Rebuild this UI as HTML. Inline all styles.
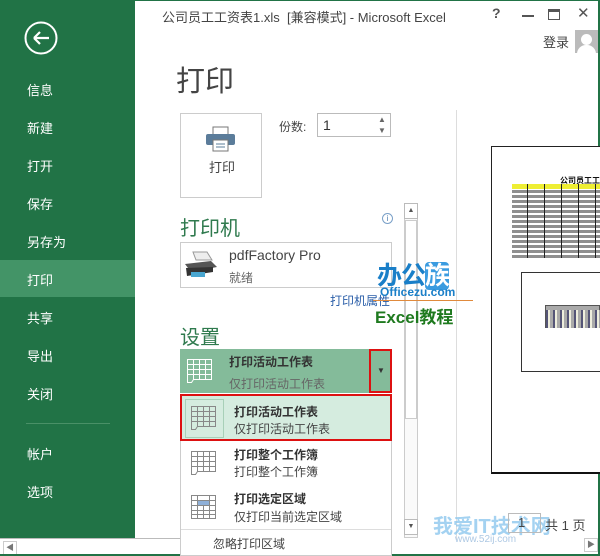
<!DOCTYPE html><html><head><meta charset="utf-8"><style>
*{margin:0;padding:0;box-sizing:border-box}
body{width:600px;height:556px;overflow:hidden;background:#fff;font-family:"Liberation Sans","Noto Sans CJK SC",sans-serif;position:relative;color:#444}
.a{position:absolute}
.side{left:0;top:0;width:135px;height:538px;background:#217346}
.si{position:absolute;left:27px;color:#fff;font-size:13px}
.t{font-size:12px;color:#444;white-space:nowrap}
</style></head><body>
<div class="a side">
<svg class="a" style="left:24px;top:21px" width="36" height="36"><circle cx="17" cy="17" r="15.5" fill="none" stroke="#fff" stroke-width="2"/><path d="M10 17H25M10 17L16 11M10 17L16 23" stroke="#fff" stroke-width="2.2" fill="none"/></svg>
<div class="si" style="top:80px">信息</div>
<div class="si" style="top:118px">新建</div>
<div class="si" style="top:156px">打开</div>
<div class="si" style="top:194px">保存</div>
<div class="si" style="top:232px">另存为</div>
<div class="a" style="left:0;top:260px;width:135px;height:37px;background:#439467"></div>
<div class="si" style="top:270px">打印</div>
<div class="si" style="top:308px">共享</div>
<div class="si" style="top:346px">导出</div>
<div class="si" style="top:384px">关闭</div>
<div class="a" style="left:26px;top:423px;width:84px;height:1px;background:#4a9067"></div>
<div class="si" style="top:444px">帐户</div>
<div class="si" style="top:482px">选项</div>
</div>
<div class="a" style="left:0;top:538px;width:180px;height:18px;border-top:1px solid #bbb;background:#fff"></div>
<div class="a" style="left:3px;top:541px;width:14px;height:14px;border:1px solid #ccc;font-size:8px;color:#777;text-align:center;line-height:12px">◀</div>
<div class="a" style="left:0;top:554px;width:600px;height:2px;background:#217346"></div>
<div class="a" style="left:598px;top:0;width:2px;height:556px;background:#217346"></div>
<div class="a" style="left:135px;top:0;width:465px;height:1px;background:#217346"></div>

<div class="a t" style="left:162px;top:7px;font-size:13px">公司员工工资表1.xls&nbsp; [兼容模式] - Microsoft Excel</div>
<div class="a" style="left:492px;top:5px;font-size:14px;font-weight:bold;color:#555">?</div>
<div class="a" style="left:522px;top:15px;width:12px;height:2px;background:#555"></div>
<div class="a" style="left:548px;top:9px;width:12px;height:11px;border:1px solid #555;border-top-width:3px"></div>
<div class="a" style="left:577px;top:4px;font-size:15px;color:#555">✕</div>
<div class="a t" style="left:543px;top:32px;font-size:13px">登录</div>
<div class="a" style="left:575px;top:30px;width:23px;height:23px;background:#bbb;overflow:hidden"><div class="a" style="left:6px;top:4px;width:11px;height:11px;border-radius:50%;background:#fff"></div><div class="a" style="left:2px;top:15px;width:19px;height:14px;border-radius:9px 9px 0 0;background:#fff"></div></div>

<div class="a" style="left:176px;top:58px;font-size:29px;color:#444">打印</div>
<div class="a" style="left:180px;top:113px;width:82px;height:85px;border:1px solid #ccc"></div>
<svg class="a" style="left:205px;top:126px" width="32" height="26"><rect x="8" y="1" width="15" height="8" fill="#fff" stroke="#777"/><rect x="1" y="8" width="29" height="11" rx="2" fill="#5b7c9a"/><rect x="8" y="14" width="15" height="11" fill="#fff" stroke="#777"/><path d="M11 18h9M11 21h9" stroke="#5b7c9a"/></svg>
<div class="a t" style="left:209px;top:157px;font-size:13px">打印</div>
<div class="a t" style="left:279px;top:118px">份数:</div>
<div class="a" style="left:317px;top:113px;width:74px;height:24px;border:1px solid #bbb"></div>
<div class="a" style="left:323px;top:117px;font-size:14px;color:#333">1</div>
<div class="a" style="left:378px;top:114px;font-size:8px;color:#666;line-height:11px">▲<br>▼</div>

<div class="a" style="left:180px;top:212px;font-size:20px;color:#2f7a4e">打印机</div>
<div class="a" style="left:382px;top:213px;width:11px;height:11px;border:1px solid #7aa0c8;border-radius:50%;font-size:8px;color:#5080b0;text-align:center;line-height:9px">i</div>
<div class="a" style="left:180px;top:242px;width:212px;height:46px;border:1px solid #ccc"></div>
<svg class="a" style="left:183px;top:250px" width="36" height="30"><path d="M10 2l14 0 5 8-16 0z" fill="#eee" stroke="#999"/><path d="M2 14l26-3 6 6-26 5z" fill="#555"/><path d="M3 18l27-1 0 5-26 4z" fill="#333"/><rect x="8" y="22" width="14" height="5" fill="#49a6d0"/></svg>
<div class="a t" style="left:229px;top:247px;font-size:14px">pdfFactory Pro</div>
<div class="a t" style="left:229px;top:269px;color:#666">就绪</div>
<div class="a t" style="left:330px;top:292px;color:#2a5ea8">打印机属性</div>

<div class="a" style="left:404px;top:203px;width:14px;height:335px;border:1px solid #ccc;background:#fafafa"></div>
<div class="a" style="left:404px;top:203px;width:14px;height:16px;border:1px solid #bbb;font-size:7px;text-align:center;line-height:14px;color:#555;background:#fff">▲</div>
<div class="a" style="left:405px;top:220px;width:12px;height:199px;border:1px solid #ccc;background:#fff"></div>
<div class="a" style="left:404px;top:519px;width:14px;height:16px;border:1px solid #bbb;font-size:7px;text-align:center;line-height:14px;color:#555;background:#fff">▼</div>
<div class="a" style="left:456px;top:110px;width:1px;height:430px;background:#ddd"></div>

<div class="a" style="left:180px;top:321px;font-size:20px;color:#2f7a4e">设置</div>
<div class="a" style="left:180px;top:349px;width:212px;height:44px;background:#84bb9a"></div>
<div class="a" style="left:369px;top:349px;width:23px;height:44px;border:2px solid #d11"></div>
<div class="a" style="left:377px;top:366px;font-size:8px;color:#333">▼</div>
<div class="a t" style="left:229px;top:353px;font-weight:bold;color:#333;font-size:12px">打印活动工作表</div>
<div class="a t" style="left:229px;top:375px;color:#666;font-size:12px">仅打印活动工作表</div>
<svg class="a" style="left:186px;top:358px" width="28" height="26"><g fill="none" stroke="#fff"><path d="M1.5 1.5h24v20h-18l-2 3h-4z"/><path d="M7.5 1.5v20M13.5 1.5v20M19.5 1.5v20M1.5 6.5h24M1.5 11.5h24M1.5 16.5h24"/></g></svg>

<div class="a" style="left:180px;top:394px;width:212px;height:162px;border:1px solid #ccc;border-top:none;background:#fff"></div>
<div class="a" style="left:180px;top:394px;width:212px;height:47px;background:#d5ecdf;border:2px solid #d11"></div>
<div class="a" style="left:185px;top:399px;width:39px;height:39px;border:1px solid #a8d0b8"></div>
<svg class="a" style="left:190px;top:405px" width="28" height="26"><g fill="none" stroke="#888"><path d="M1.5 1.5h24v20h-18l-2 3h-4z"/><path d="M7.5 1.5v20M13.5 1.5v20M19.5 1.5v20M1.5 6.5h24M1.5 11.5h24M1.5 16.5h24"/></g></svg>
<div class="a t" style="left:234px;top:403px;font-weight:bold;color:#333">打印活动工作表</div>
<div class="a t" style="left:234px;top:420px">仅打印活动工作表</div>
<svg class="a" style="left:190px;top:450px" width="28" height="26"><g fill="none" stroke="#888"><path d="M1.5 1.5h24v20h-18l-2 3h-4z"/><path d="M7.5 1.5v20M13.5 1.5v20M19.5 1.5v20M1.5 6.5h24M1.5 11.5h24M1.5 16.5h24"/></g></svg>
<div class="a t" style="left:234px;top:446px;font-weight:bold;color:#333">打印整个工作簿</div>
<div class="a t" style="left:234px;top:463px">打印整个工作簿</div>
<svg class="a" style="left:190px;top:494px" width="28" height="26"><rect x="7.5" y="6.5" width="12" height="5" fill="#8fb0d8"/><g fill="none" stroke="#888"><path d="M1.5 1.5h24v23h-24z"/><path d="M7.5 1.5v23M13.5 11.5v13M19.5 1.5v23M1.5 6.5h24M1.5 11.5h24M1.5 16.5h24M1.5 20.5h24"/></g></svg>
<div class="a t" style="left:234px;top:490px;font-weight:bold;color:#333">打印选定区域</div>
<div class="a t" style="left:234px;top:508px">仅打印当前选定区域</div>
<div class="a" style="left:181px;top:529px;width:210px;height:1px;background:#ddd"></div>
<div class="a t" style="left:213px;top:535px">忽略打印区域</div>

<div class="a" style="left:377px;top:256px;font-size:25px;font-weight:bold;color:#1a7fc8;letter-spacing:-1px">办公<span style="background:#3a9be0;color:#fff;border-radius:4px">族</span></div>
<div class="a" style="left:380px;top:285px;font-size:12px;font-weight:bold;color:#1a7fc8">Officezu.com</div>
<div class="a" style="left:373px;top:300px;width:100px;height:1px;background:#e08a3c"></div>
<div class="a" style="left:375px;top:303px;font-size:17px;font-weight:bold;color:#1f7a1f">Excel教程</div>

<div class="a" style="left:491px;top:146px;width:110px;height:328px;border:1px solid #222;border-bottom:2px solid #111;background:#fff"></div>
<div class="a" style="left:560px;top:175px;font-size:8px;font-weight:bold;color:#111">公司员工工</div>
<div class="a" style="left:512px;top:184px;width:88px;height:74px;background:repeating-linear-gradient(#fff 0 1px,#333 1px 4px,#fff 4px 5px);opacity:.55"></div>
<div class="a" style="left:512px;top:184px;width:88px;height:5px;background:#ee3"></div>
<div class="a" style="left:512px;top:184px;width:88px;height:74px;background:repeating-linear-gradient(90deg,transparent 0 15px,#222 15px 16px,transparent 16px 17px)"></div>
<div class="a" style="left:521px;top:272px;width:80px;height:100px;border:1px solid #333"></div>
<div class="a" style="left:545px;top:305px;width:55px;height:23px;background:#aaa;border:1px solid #555"></div>
<div class="a" style="left:546px;top:310px;width:54px;height:18px;background:repeating-linear-gradient(90deg,#557 0 2px,#eed 2px 4px,#aaa 4px 7px)"></div>

<div class="a" style="left:433px;top:510px;font-size:20px;font-weight:bold;color:#8ec8ee;opacity:.8">我爱IT技术网</div>
<div class="a" style="left:455px;top:534px;font-size:10px;color:#9bd;opacity:.8">www.52ij.com</div>
<div class="a" style="left:508px;top:513px;width:33px;height:20px;border:1px solid #bbb"></div>
<div class="a t" style="left:518px;top:515px;font-size:13px">1</div>
<div class="a t" style="left:545px;top:515px;font-size:13px">共 1 页</div>
<div class="a" style="left:584px;top:538px;width:14px;height:14px;border:1px solid #ccc;font-size:8px;color:#777;text-align:center;line-height:12px">▶</div>
</body></html>
